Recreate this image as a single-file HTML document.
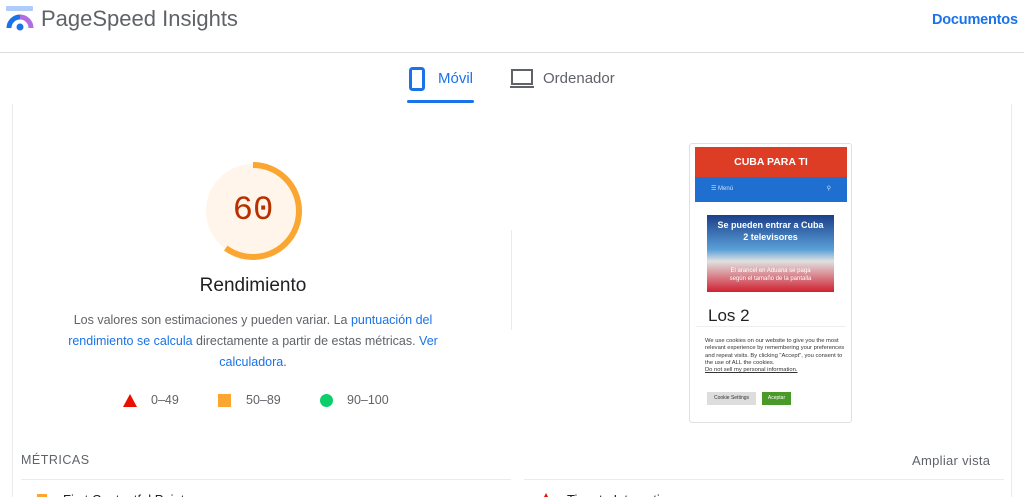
<!DOCTYPE html>
<html><head><meta charset="utf-8"><style>
*{margin:0;padding:0;box-sizing:border-box}
html,body{width:1024px;height:497px;overflow:hidden}
body{background:#fff;font-family:"Liberation Sans",Arial,sans-serif;position:relative;color:#202124}
.a{position:absolute}
a{color:#1a73e8;text-decoration:none}
</style></head><body>
<svg class="a" style="left:6px;top:6px" width="28" height="26" viewBox="0 0 28 26">
<rect x="0" y="0" width="27" height="5" fill="#aecbfa" rx="1"/>
<path d="M3 22 A11 11 0 0 1 14 11" stroke="#1a73e8" stroke-width="5" fill="none"/>
<path d="M14 11 A11 11 0 0 1 25 22" stroke="#b06ee0" stroke-width="5" fill="none"/>
<circle cx="14" cy="21" r="3.5" fill="#1a73e8"/>
</svg>
<div class="a" style="left:41px;top:6px;font-size:22px;color:#5f6368">PageSpeed Insights</div>
<div class="a" style="left:932px;top:12px;font-size:14.5px;color:#1a73e8;font-weight:bold;letter-spacing:-0.2px">Documentos</div>
<div class="a" style="left:0;top:52px;width:1024px;height:1px;background:#dadce0"></div>

<svg class="a" style="left:409px;top:67px" width="16" height="24" viewBox="0 0 16 24"><rect x="1.5" y="1.5" width="13" height="21" rx="2" fill="none" stroke="#1a73e8" stroke-width="3"/></svg>
<div class="a" style="left:438px;top:70px;font-size:15px;color:#1a73e8">Móvil</div>
<div class="a" style="left:407px;top:100px;width:67px;height:3px;background:#1a73e8;border-radius:2px"></div>
<svg class="a" style="left:510px;top:69px" width="24" height="20" viewBox="0 0 24 20"><rect x="2" y="1" width="20" height="14" fill="none" stroke="#5f6368" stroke-width="2"/><rect x="0" y="17" width="24" height="2" fill="#5f6368"/></svg>
<div class="a" style="left:543px;top:70px;font-size:15px;color:#5f6368">Ordenador</div>

<div class="a" style="left:12px;top:104px;width:1px;height:393px;background:#e8eaed"></div>
<div class="a" style="left:1011px;top:104px;width:1px;height:393px;background:#e8eaed"></div>
<div class="a" style="left:511px;top:230px;width:1px;height:100px;background:#e8eaed"></div>

<svg class="a" style="left:203px;top:161px" width="100" height="100" viewBox="0 0 100 100">
<circle cx="50" cy="50" r="47" fill="#fff5ea"/>
<circle cx="50" cy="50" r="46" fill="none" stroke="#fba631" stroke-width="6" stroke-dasharray="173.4 289" transform="rotate(-90 50 50)"/>
</svg>
<div class="a" style="left:203px;top:192px;width:100px;text-align:center;font-family:'Liberation Mono',monospace;font-size:34px;color:#b83000">60</div>
<div class="a" style="left:153px;top:275px;width:200px;text-align:center;font-size:19px;color:#202124">Rendimiento</div>
<div class="a" style="left:60px;top:310px;width:386px;text-align:center;font-size:12.5px;line-height:21px;color:#5f6368">Los valores son estimaciones y pueden variar. La <a>puntuación del rendimiento se calcula</a> directamente a partir de estas métricas. <a>Ver calculadora</a>.</div>

<svg class="a" style="left:123px;top:394px" width="14" height="13"><path d="M7 0 L14 13 L0 13Z" fill="#eb0f00"/></svg>
<div class="a" style="left:151px;top:393px;font-size:12.5px;color:#5f6368">0–49</div>
<div class="a" style="left:218px;top:394px;width:13px;height:13px;background:#fba631"></div>
<div class="a" style="left:246px;top:393px;font-size:12.5px;color:#5f6368">50–89</div>
<div class="a" style="left:320px;top:394px;width:13px;height:13px;border-radius:50%;background:#0cce6b"></div>
<div class="a" style="left:347px;top:393px;font-size:12.5px;color:#5f6368">90–100</div>

<div class="a" style="left:689px;top:143px;width:163px;height:280px;border:1px solid #e0e0e0;border-radius:3px;background:#fff"></div>
<div class="a" style="left:695px;top:147px;width:152px;height:30px;background:#dd3d24;color:#fff;font-weight:bold;font-size:10.5px;text-align:center;line-height:30px">CUBA PARA TI</div>
<div class="a" style="left:695px;top:177px;width:152px;height:25px;background:#1e6fd0;color:#cfe0ff;font-size:6px;line-height:25px;padding-left:16px">☰ Menú<span style="position:absolute;right:16px">⚲</span></div>
<div class="a" style="left:707px;top:215px;width:127px;height:77px;background:linear-gradient(#1b3f8a,#5aa0d8 45%,#e0e0e0 60%,#d02030)"></div>
<div class="a" style="left:707px;top:219px;width:127px;text-align:center;font-size:9px;color:#fff;font-weight:bold;line-height:12px">Se pueden entrar a Cuba<br>2 televisores</div>
<div class="a" style="left:707px;top:267px;width:127px;text-align:center;font-size:6px;color:#fff;line-height:8px">El arancel en Aduana se paga<br>según el tamaño de la pantalla</div>
<div class="a" style="left:708px;top:306px;font-size:17px;color:#222">Los 2</div>
<div class="a" style="left:696px;top:326px;width:150px;height:1px;background:#eee"></div>
<div class="a" style="left:705px;top:338px;width:140px;font-size:5.8px;line-height:7.3px;color:#333">We use cookies on our website to give you the most relevant experience by remembering your preferences and repeat visits. By clicking "Accept", you consent to the use of ALL the cookies.<br><u>Do not sell my personal information.</u></div>
<div class="a" style="left:707px;top:392px;width:49px;height:13px;background:#ddd;font-size:5px;line-height:13px;text-align:center;color:#333">Cookie Settings</div>
<div class="a" style="left:762px;top:392px;width:29px;height:13px;background:#4a9a2a;font-size:5px;line-height:13px;text-align:center;color:#fff">Aceptar</div>

<div class="a" style="left:21px;top:453px;font-size:12.5px;letter-spacing:.5px;color:#5f6368">MÉTRICAS</div>
<div class="a" style="left:912px;top:453px;font-size:13px;letter-spacing:.3px;color:#5f6368">Ampliar vista</div>
<div class="a" style="left:21px;top:479px;width:490px;height:1px;background:#ebebeb"></div>
<div class="a" style="left:524px;top:479px;width:480px;height:1px;background:#ebebeb"></div>
<div class="a" style="left:37px;top:494px;width:10px;height:10px;background:#fba631"></div>
<div class="a" style="left:63px;top:492px;font-size:13px">First Contentful Paint</div>
<svg class="a" style="left:541px;top:493px" width="10" height="10"><path d="M5 0L10 10H0Z" fill="#eb0f00"/></svg>
<div class="a" style="left:567px;top:492px;font-size:13px">Time to Interactive</div>
</body></html>
